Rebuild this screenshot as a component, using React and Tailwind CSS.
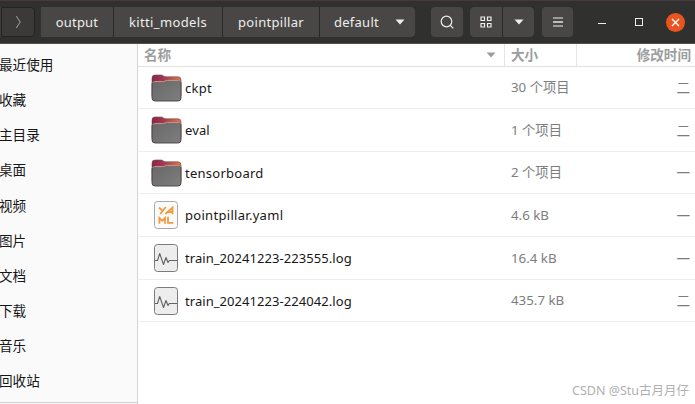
import React from "react";

const places = ["最近使用", "收藏", "主目录", "桌面", "视频", "图片", "文档", "下载", "音乐", "回收站"];

const files = [
  { name: "ckpt", kind: "folder", size: "30 个项目", date: "二", row: "h-[42px]", track: "tracking-[0.25px]" },
  { name: "eval", kind: "folder", size: "1 个项目", date: "二", row: "h-[43px]", track: "tracking-[0.1px]" },
  { name: "tensorboard", kind: "folder", size: "2 个项目", date: "一", row: "h-[42px]", track: "tracking-[0.25px]" },
  { name: "pointpillar.yaml", kind: "yaml", size: "4.6 kB", date: "一", row: "h-[43px]", track: "tracking-[0.3px]" },
  { name: "train_20241223-223555.log", kind: "log", size: "16.4 kB", date: "一", row: "h-[43px]", track: "tracking-[0.06px]" },
  { name: "train_20241223-224042.log", kind: "log", size: "435.7 kB", date: "二", row: "h-[42px]", track: "tracking-[0.06px]" },
];

function FolderIcon() {
  return (
    <svg width="32" height="29" viewBox="0 0 32 29" className="block">
      <defs>
        <linearGradient id="back" x1="0" x2="1" y1="0" y2="0">
          <stop offset="0" stopColor="#8a2549" />
          <stop offset="0.4" stopColor="#a33a50" />
          <stop offset="1" stopColor="#e07a48" />
        </linearGradient>
        <linearGradient id="front" x1="0" x2="1" y1="0" y2="1">
          <stop offset="0" stopColor="#686868" />
          <stop offset="1" stopColor="#7f7e7e" />
        </linearGradient>
      </defs>
      <path d="M1 22V4Q1 1 4 1H10Q11.5 1 12.5 2Q13.5 2.8 15 2.8H27Q30 2.8 30 6V22Z" fill="url(#back)" stroke="#694451" strokeWidth="0.6" />
      <path d="M1 10Q1 7.6 3.5 7.6H11.5Q13 7.6 14 7Q15 6.4 16.5 6.4H27.5Q30 6.4 30 9V24Q30 27 27 27H4Q1 27 1 24Z" fill="url(#front)" stroke="#493f3e" strokeWidth="0.9" />
      <path d="M1.8 8.8Q2.3 7.6 3.5 7.6H11.5Q13 7.6 14 7Q15 6.4 16.5 6.4H27.5Q29 6.4 29.6 7.6" fill="none" stroke="#d29c90" strokeWidth="1" />
    </svg>
  );
}

function LogIcon() {
  return (
    <svg width="26" height="30" viewBox="0 0 26 30" className="block">
      <rect x="1.5" y="1.5" width="23" height="27" rx="3" fill="#ededed" stroke="#7c7c7c" />
      <path d="M2 17.5H4.5L6.7 10.5L10.5 21.5L13 14.5L15 19.5L16.3 17.5H24" fill="none" stroke="#646464" strokeWidth="1.1" strokeLinejoin="round" />
    </svg>
  );
}

function YamlIcon() {
  return (
    <svg width="26" height="30" viewBox="0 0 26 30" className="block">
      <rect x="1.5" y="1.5" width="23" height="27" rx="3" fill="#fafafa" stroke="#a8a8a8" />
      <g fill="none" stroke="#ee9c3f" strokeWidth="1.8">
        <path d="M6 7.5L9.4 10.8M12.8 7L7.2 14M12.4 14L19.5 7.6V14.2M15.5 12H19" />
        <path d="M6.4 23.7V18L9.2 20.8L12 18V23.7M15 16.8V22.9H20.3" />
      </g>
    </svg>
  );
}

function Caret({ className }) {
  return (
    <svg width="10" height="6" viewBox="0 0 10 6" className={className}>
      <path d="M0.5 0.5H9.5L5 5.5Z" fill="currentColor" />
    </svg>
  );
}

const button = "flex h-[30px] items-center justify-center bg-[#484745]";

function HeaderBar() {
  return (
    <header className="flex h-11 shrink-0 items-center border-t border-b border-t-[#49373f] border-b-[#504f4d] bg-[#30302e] text-[13px] text-[#eeeeec]">
      <div className="h-[30px] w-px bg-[#3d3c3a]" />
      <div className="flex h-[30px] w-[34px] items-center justify-center rounded-r border border-[#242322] bg-[#3b3a38]">
        <svg width="7" height="16" viewBox="0 0 7 16">
          <path d="M1.2 2L5.2 8L1.2 14" fill="none" stroke="#929190" strokeWidth="1.1" />
        </svg>
      </div>
      <nav className="ml-[6px] flex gap-px bg-[#292827]">
        <div className={`${button} w-[72px] tracking-[0.2px]`}>output</div>
        <div className={`${button} w-[108px] tracking-[0.35px]`}>kitti_models</div>
        <div className={`${button} w-24 tracking-[0.3px]`}>pointpillar</div>
        <div className={`${button} w-[95px] rounded-r pl-1 tracking-[0.25px]`}>
          <span>default</span>
          <Caret className="ml-4" />
        </div>
      </nav>
      <div className={`${button} ml-4 w-8 rounded`}>
        <svg width="16" height="16" viewBox="0 0 16 16" fill="none" stroke="currentColor" strokeWidth="1.2">
          <circle cx="7.5" cy="7.5" r="5.3" />
          <path d="M11.3 11.3L14.3 14.3" />
        </svg>
      </div>
      <div className="ml-[7px] flex gap-px bg-[#292827]">
        <div className={`${button} w-8 rounded-l`}>
          <svg width="12" height="12" viewBox="0 0 12 12" fill="none" stroke="currentColor" strokeWidth="1.2">
            <path d="M1 1H4.5V4.5H1ZM7.5 1H11V4.5H7.5ZM1 7.5H4.5V11H1ZM7.5 7.5H11V11H7.5Z" />
          </svg>
        </div>
        <div className={`${button} w-[31px] rounded-r`}>
          <Caret />
        </div>
      </div>
      <div className={`${button} ml-2 w-[31px] rounded`}>
        <svg width="10" height="10" viewBox="0 0 10 10" fill="currentColor">
          <path d="M0 0.5H10V1.5H0ZM0 8.5H10V9.5H0Z" />
          <path d="M0 4H10V6H0Z" opacity="0.7" />
        </svg>
      </div>
      <div className="mt-[3px] ml-[25px] h-px w-2 bg-[#eeeeec]" />
      <div className="ml-[29px] size-2 border border-[#eeeeec]" />
      <div className="mr-[10px] ml-auto flex size-[19px] items-center justify-center rounded-full bg-[#e95420]">
        <svg width="9" height="9" viewBox="0 0 9 9" fill="none" stroke="#fff" strokeWidth="1.4">
          <path d="M1 1L8 8M8 1L1 8" />
        </svg>
      </div>
    </header>
  );
}

export default function App() {
  return (
    <div className="relative flex h-[404px] w-[695px] flex-col overflow-hidden bg-white font-['Noto_Sans','Noto_Sans_CJK_SC',sans-serif] leading-none">
      <HeaderBar />
      <div className="flex min-h-0 flex-1">
        <aside className="flex w-[138px] shrink-0 flex-col border-r border-[#d4d4d4] bg-[#fafafa] pt-[3px]">
          {places.map((place) => (
            <div key={place} className="-ml-px flex h-[35.2px] shrink-0 items-center text-[13.6px] whitespace-nowrap text-[#161616]">
              {place}
            </div>
          ))}
          <div className="mt-[3px] h-px shrink-0 bg-[#d0d0d0]" />
        </aside>
        <main className="flex min-w-0 flex-1 flex-col">
          <div className="flex h-[23px] shrink-0 border-b border-[#e2e2e2] text-[13.6px] font-bold text-[#9c9e9e]">
            <div className="flex w-[367px] items-center justify-between border-r border-[#e4e4e4] pr-2 pl-[6px]">
              名称
              <Caret />
            </div>
            <div className="flex w-[72px] items-center border-r border-[#e4e4e4] pl-[6px]">大小</div>
            <div className="flex flex-1 items-center justify-end pr-1">修改时间</div>
          </div>
          {files.map((file) => (
            <div key={file.name} className={`${file.row} flex shrink-0 items-center border-b border-[#eeeeee] text-[13px]`}>
              <div className="flex w-[373px] items-center pl-3">
                <div className="mr-[3px] flex w-8 justify-center">
                  {file.kind === "folder" && <div className="pt-px pl-px"><FolderIcon /></div>}
                  {file.kind === "yaml" && <YamlIcon />}
                  {file.kind === "log" && <LogIcon />}
                </div>
                <span className={`${file.track} pt-px text-[#171717]`}>{file.name}</span>
              </div>
              <div className="flex-1 pt-px text-[13.3px] text-[#7c7e7e]">{file.size}</div>
              <div className="pt-px pr-[5px] text-[13.6px] text-[#7c7e7e]">{file.date}</div>
            </div>
          ))}
        </main>
      </div>
      <div className="absolute top-[385px] left-[572px] text-[12.5px] whitespace-nowrap text-[#b0b0b0]">CSDN @Stu古月月仔</div>
    </div>
  );
}
